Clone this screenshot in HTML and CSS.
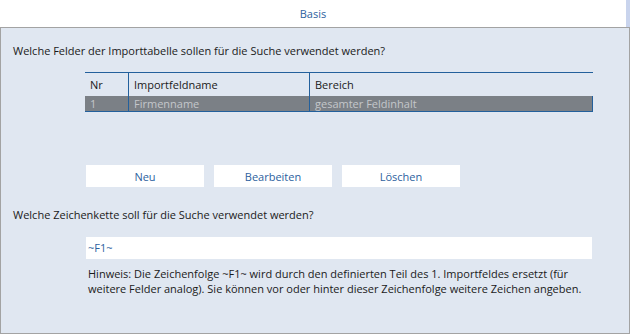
FILE: index.html
```html
<!DOCTYPE html>
<html lang="de">
  <head>
    <meta charset="utf-8">
    <title>Basis</title>
    <link rel="stylesheet" href="styles.css">
  </head>
  <body>
    <div class="tabbar">
      <div class="tab">Basis</div>
      <div class="strip"></div>
    </div>
    <div class="panel">
      <div class="question">Welche Felder der Importtabelle sollen f&uuml;r die Suche verwendet werden?</div>
      <table class="grid">
        <tr class="head">
          <td class="c-nr">Nr</td>
          <td class="c-name">Importfeldname</td>
          <td class="c-area">Bereich</td>
        </tr>
        <tr class="sel">
          <td class="c-nr">1</td>
          <td class="c-name">Firmenname</td>
          <td class="c-area">gesamter Feldinhalt</td>
        </tr>
      </table>
      <div class="buttons">
        <div class="btn">Neu</div>
        <div class="btn">Bearbeiten</div>
        <div class="btn">L&ouml;schen</div>
      </div>
      <div class="question q2">Welche Zeichenkette soll f&uuml;r die Suche verwendet werden?</div>
      <div class="input">~F1~</div>
      <p class="hint">
        Hinweis: Die Zeichenfolge ~F1~ wird durch den definierten Teil des 1. Importfeldes ersetzt (f&uuml;r
        weitere Felder analog). Sie k&ouml;nnen vor oder hinter dieser Zeichenfolge weitere Zeichen angeben.
      </p>
    </div>
  </body>
</html>
```

FILE: styles.css
```css
body {
  margin: 0px;
  width: 630px;
  height: 334px;
  overflow: hidden;
  background-color: #ffffff;
  color: #1a1a1a;
  font-family: "Open Sans", "Noto Sans", sans-serif;
  font-size: 11px;
}
.tabbar {
  display: flex;
  height: 27px;
}
.tab {
  flex: 1;
  text-align: center;
  line-height: 27px;
  color: #2d5f9e;
}
.strip {
  width: 4px;
  background-color: #c9d4ed;
}
.panel {
  box-sizing: border-box;
  width: 630px;
  height: 307px;
  border: 1px solid #a3a3a3;
  background-color: #e0e7f1;
  padding: 15px 0px 0px 12px;
}
.question {
  line-height: 16px;
}
.grid {
  border-collapse: collapse;
  margin: 13px 0px 0px 72px;
  width: 508px;
  border-top: 1px solid #23609c;
}
.grid td {
  padding: 0px 0px 0px 5px;
  border-left: 1px solid #23609c;
}
.grid td:first-child {
  border-left: none;
}
.head td {
  height: 23px;
}
.sel td {
  height: 15px;
  line-height: 15px;
  background-color: #7b8086;
  color: #c4c7cb;
  border-bottom: 1px solid #23609c;
}
.sel td:last-child {
  border-right: 1px solid #23609c;
}
.c-nr {
  width: 38px;
}
.c-name {
  width: 175px;
}
.buttons {
  display: flex;
  gap: 10px;
  margin: 53px 0px 0px 73px;
}
.btn {
  width: 118px;
  height: 22px;
  line-height: 23px;
  text-align: center;
  background-color: #ffffff;
  color: #2d5f9e;
}
.q2 {
  margin-top: 20px;
}
.input {
  box-sizing: border-box;
  width: 506px;
  height: 22px;
  margin: 14px 0px 0px 73px;
  padding-left: 2px;
  line-height: 21px;
  background-color: #ffffff;
  color: #2d5f9e;
}
.hint {
  width: 500px;
  margin: 7px 0px 0px 75px;
  line-height: 15px;
}
```
